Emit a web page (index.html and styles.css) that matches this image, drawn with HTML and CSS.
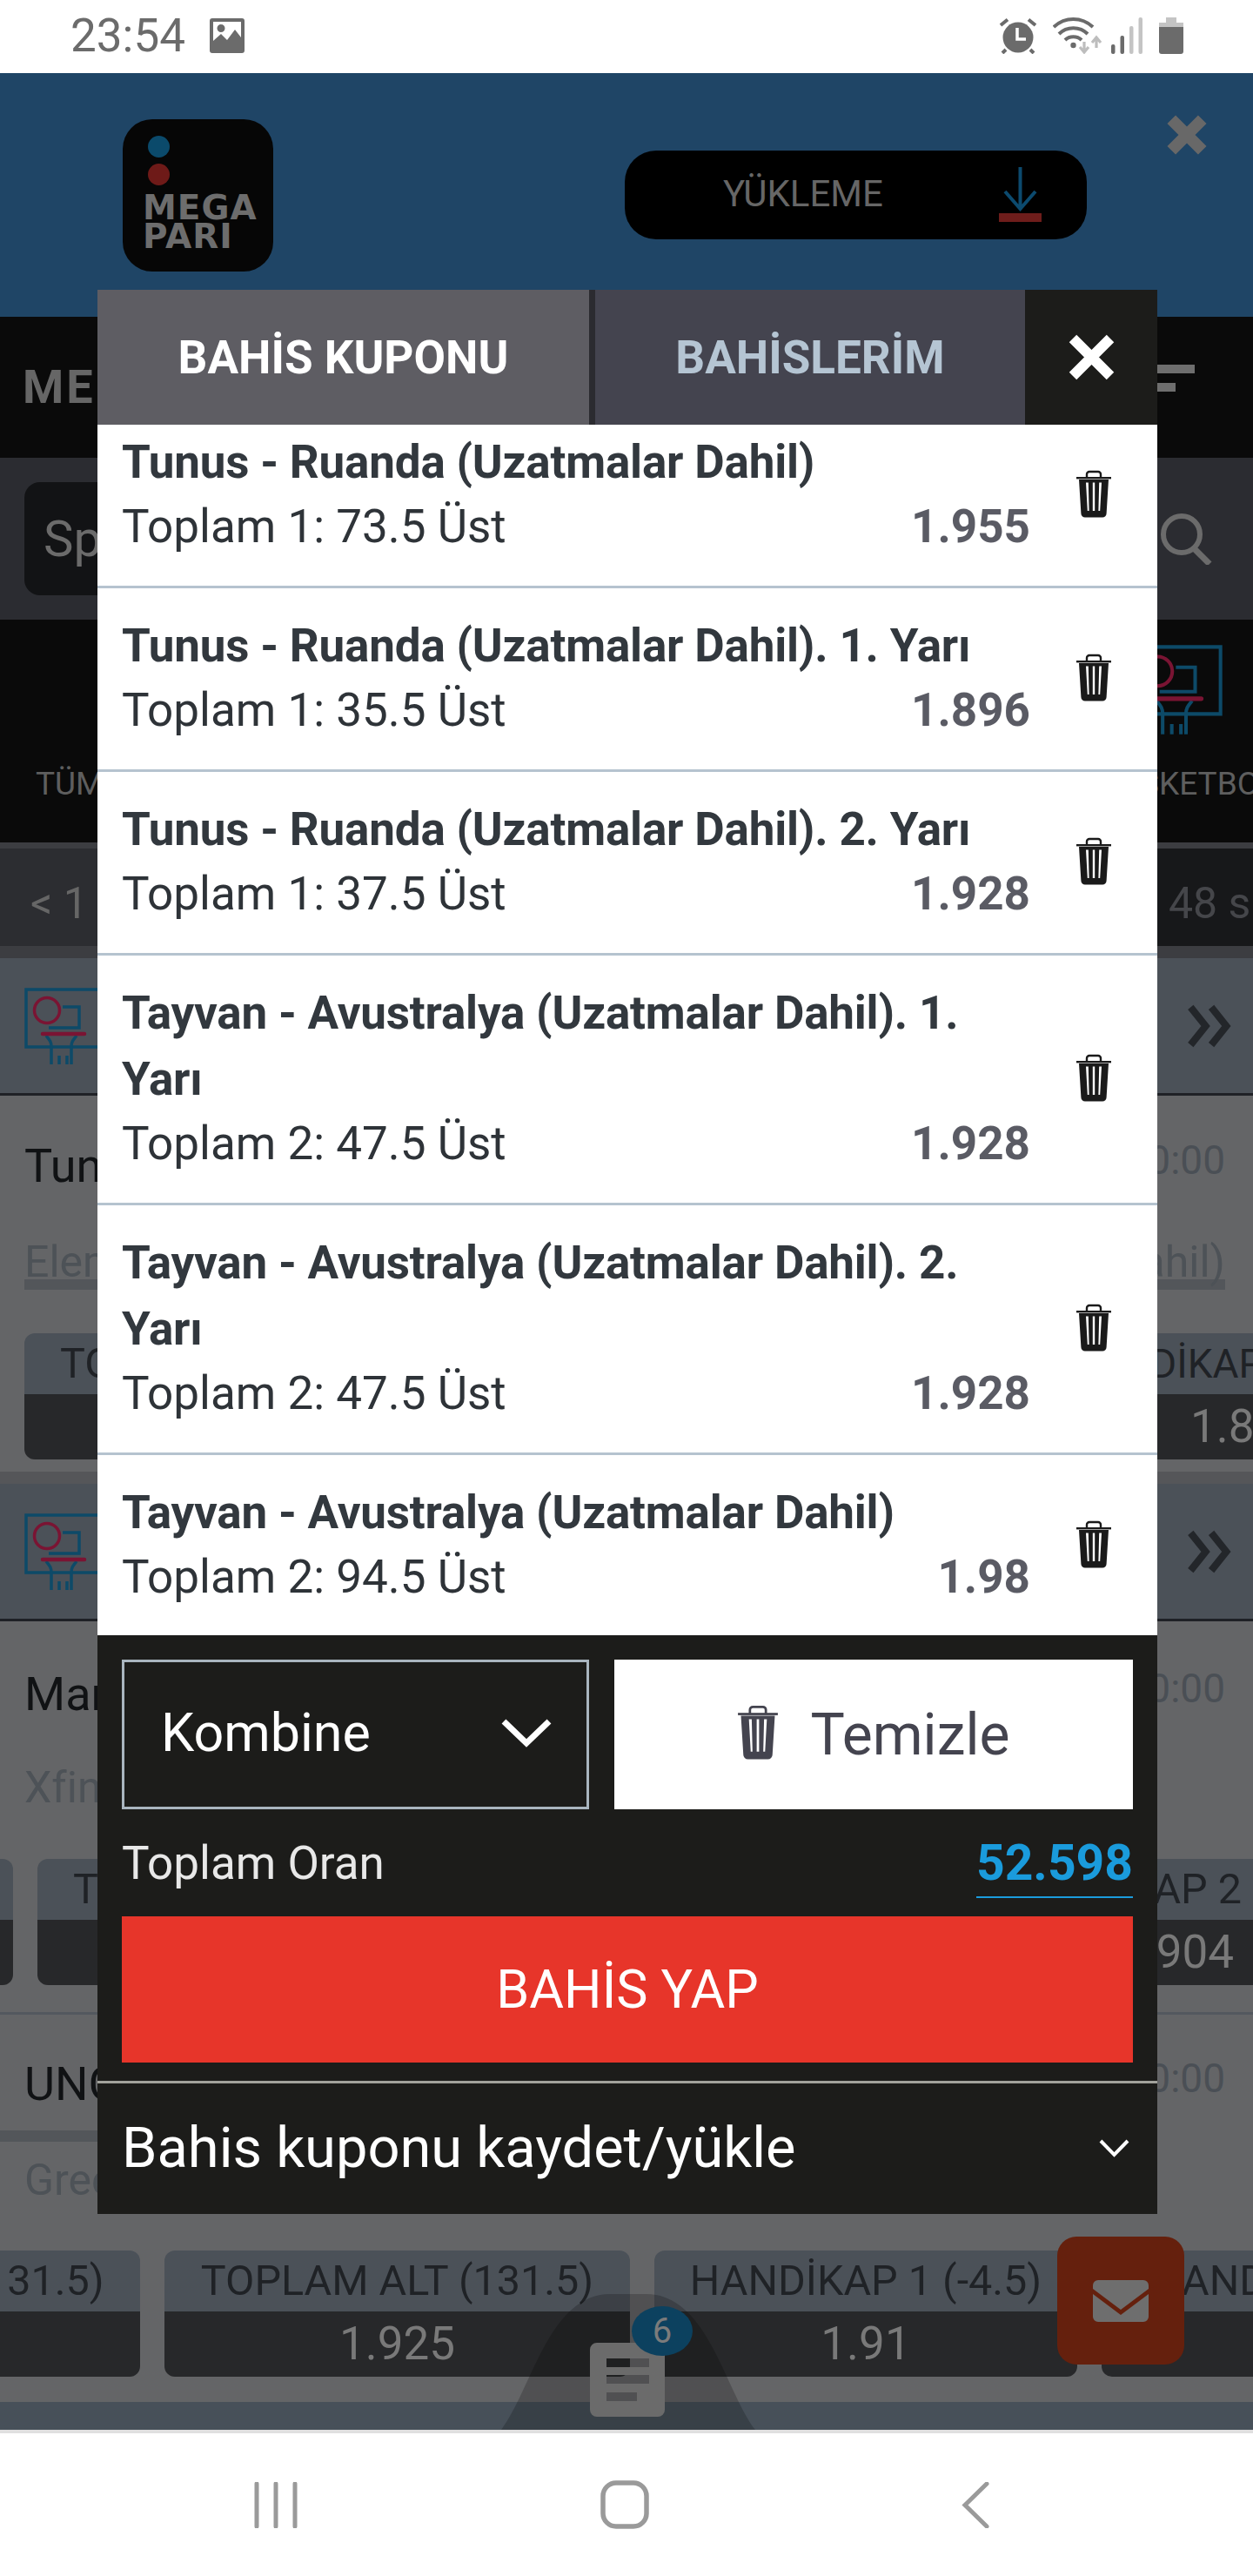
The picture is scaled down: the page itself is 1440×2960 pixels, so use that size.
FILE: index.html
```html
<!DOCTYPE html>
<html lang="tr">
<head>
<meta charset="utf-8">
<title>Bahis Kuponu</title>
<link rel="stylesheet" href="styles.css">
</head>
<body>
<svg class="defs" width="0" height="0" aria-hidden="true">
  <symbol id="trash" viewBox="0 0 40 55">
    <path d="M12 9V5a3 3 0 0 1 3-3h10a3 3 0 0 1 3 3v4" fill="none" stroke="currentColor" stroke-width="2.4"/>
    <rect x="0" y="8" width="40" height="2.4" fill="currentColor"/>
    <path fill-rule="evenodd" fill="currentColor" d="M3 11H37L34.6 50a4.6 4.6 0 0 1-4.6 4.6H10A4.6 4.6 0 0 1 5.400 50ZM11 14.500L12.800 47H14.600L13.800 14.500ZM18.800 14.500V47H21.200V14.500ZM26.200 14.500L25.400 47H27.200L29 14.500Z"/>
  </symbol>
  <symbol id="hoop" viewBox="0 0 90 90">
    <path d="M2 2H88V68H2ZM44 22H63V46H28" fill="none" stroke="#0d4a68" stroke-width="3.500"/>
    <circle cx="26" cy="26" r="14.500" fill="none" stroke="#7a1433" stroke-width="3.500"/>
    <path d="M25 55C29 60 31 62 31 68V88M60 55C56 60 54 62 54 68V88M40 78V88M49 78V88" fill="none" stroke="#0d4a68" stroke-width="3.500"/>
    <path d="M21 53H69" fill="none" stroke="#7a1433" stroke-width="4.500" stroke-linecap="round"/>
  </symbol>
  <symbol id="dchev" viewBox="0 0 50 46">
    <path d="M4 3L20 23L4 43M26 3L42 23L26 43" fill="none" stroke="#23262a" stroke-width="7.500"/>
  </symbol>
</svg>

<div class="page">
  <header class="status">
    <div class="status-left">
      <span class="clock">23:54</span>
      <svg class="ic-gallery" viewBox="0 0 40 40"><path fill="#6b6b6b" fill-rule="evenodd" d="M3 0H37A3 3 0 0 1 40 3V37A3 3 0 0 1 37 40H3A3 3 0 0 1 0 37V3A3 3 0 0 1 3 0ZM4 4V26L13 18L20 25L29 13L36 22V4ZM13 7A4.500 4.500 0 1 0 13.010 16A4.500 4.500 0 0 0 13 7Z"/></svg>
    </div>
    <div class="status-right">
      <svg class="ic-alarm" viewBox="0 0 44 42"><circle cx="22" cy="23" r="17.500" fill="#6b6b6b"/><path d="M21 12V25H31" fill="none" stroke="#fff" stroke-width="3.500"/><path d="M2 9L10 2.500M42 9L34 2.500M8 37L4 41M36 37L40 41" stroke="#6b6b6b" stroke-width="4" fill="none"/></svg>
      <svg class="ic-wifi" viewBox="0 0 57 42"><path d="M1 11C14 -1 33 -1 46 11M7 19C16 10 31 10 40 19M14 26C19 21 28 21 33 26" fill="none" stroke="#6b6b6b" stroke-width="4"/><circle cx="23.500" cy="32" r="3.200" fill="#6b6b6b"/><path d="M36 28V40M31 34L36 40L41 34" fill="none" stroke="#bdbdbd" stroke-width="3.200"/><path d="M50 35V24M45 29L50 23L55 29" fill="none" stroke="#bdbdbd" stroke-width="3.200"/></svg>
      <svg class="ic-signal" viewBox="0 0 36 42"><rect x="0" y="31" width="4.500" height="11" rx="2" fill="#6b6b6b"/><rect x="10.500" y="21" width="4.500" height="21" rx="2" fill="#6b6b6b"/><rect x="21" y="10" width="4.500" height="32" rx="2" fill="#c4c4c4"/><rect x="31.500" y="0" width="4.500" height="42" rx="2" fill="#c4c4c4"/></svg>
      <svg class="ic-battery" viewBox="0 0 28 42"><path d="M8 0H20V6H28V11H0V6H8Z" fill="#c4c4c4"/><path d="M0 11H28V39A3 3 0 0 1 25 42H3A3 3 0 0 1 0 39Z" fill="#6b6b6b"/></svg>
    </div>
  </header>

  <section class="brand">
    <div class="logo">
      <span class="dot dot-blue"></span>
      <span class="dot dot-red"></span>
      <span class="logo-text">MEGA<br>PARI</span>
    </div>
    <div class="download">
      <span>YÜKLEME</span>
      <svg class="ic-download" viewBox="0 0 49 64"><path d="M24.500 0V46M7 28L24.500 48L42 28" fill="none" stroke="#0c4a6e" stroke-width="4"/><rect x="0" y="53" width="49" height="10" fill="#6e1d1b"/></svg>
    </div>
    <svg class="ic-brand-x" viewBox="0 0 46 44"><path d="M6 5L40 39M40 5L6 39" stroke="#686868" stroke-width="13"/></svg>
  </section>

  <nav class="topnav">
    <span class="topnav-title">MENÜ</span>
    <span class="burger"><i class="b-long"></i><i class="b-short"></i></span>
  </nav>

  <div class="searchbar">
    <div class="search-input">Spor</div>
    <svg class="ic-search" viewBox="0 0 64 60"><circle cx="26" cy="25" r="21" fill="none" stroke="#6b6b6b" stroke-width="6"/><path d="M40 41L58 59" stroke="#6b6b6b" stroke-width="7"/></svg>
  </div>

  <div class="sports">
    <div class="sport sport-all"><span class="sport-label">TÜM</span></div>
    <div class="sport sport-basket">
      <svg class="hoop-big"><use href="#hoop"/></svg>
      <span class="sport-label sport-label-shift">BASKETBOL</span>
    </div>
  </div>

  <div class="timebar">
    <span class="time-left">&lt; 1</span>
    <span class="time-right">48 s.</span>
  </div>

  <div class="league">
    <svg class="hoop"><use href="#hoop"/></svg>
    <svg class="dchev"><use href="#dchev"/></svg>
  </div>
  <article class="match match-a">
    <div class="m-line"><span class="m-name">Tunus</span><span class="m-time">00:00</span></div>
    <div class="m-sub m-sub-bar"><span>Elemeler</span><span>(Uzatmalar Dahil)</span></div>
    <div class="cards">
      <div class="card card-w1"><div class="card-h">TOPLAM</div><div class="card-v">1.9</div></div>
      <div class="card card-w2"><div class="card-h">HANDİKAP 1</div><div class="card-v">1.8</div></div>
    </div>
  </article>
  <div class="strip"></div>

  <div class="league league-b">
    <svg class="hoop"><use href="#hoop"/></svg>
    <svg class="dchev"><use href="#dchev"/></svg>
  </div>
  <article class="match match-b">
    <div class="m-line"><span class="m-name">Mar</span><span class="m-time">00:00</span></div>
    <div class="m-sub"><span>Xfinity</span></div>
    <div class="cards">
      <div class="card card-w3"><div class="card-h">TOPLAM</div><div class="card-v">1.9</div></div>
      <div class="card card-w4"><div class="card-h">TOPLAM ALT</div><div class="card-v">1.9</div></div>
      <div class="card card-w5"><div class="card-h">HANDİKAP 2</div><div class="card-v">1.904</div></div>
    </div>
  </article>

  <article class="match match-c">
    <div class="m-line m-line-bar"><span class="m-name">UNG</span><span class="m-time">00:00</span></div>
    <div class="m-sub"><span>Green</span></div>
    <div class="cards">
      <div class="card card-w6 card-first"><div class="card-h">TOPLAM ÜST (131.5)</div><div class="card-v">1.9</div></div>
      <div class="card card-w6"><div class="card-h">TOPLAM ALT (131.5)</div><div class="card-v">1.925</div></div>
      <div class="card card-w7"><div class="card-h">HANDİKAP 1 (-4.5)</div><div class="card-v">1.91</div></div>
      <div class="card card-w8"><div class="card-h">HANDİKAP 2</div><div class="card-v">1.9</div></div>
    </div>
  </article>
  <div class="pagefoot"></div>

  <div class="androidnav">
    <svg class="nav-recent" viewBox="0 0 50 53"><path d="M3 2V51M25 2V51M47 2V51" stroke="#9a9a9a" stroke-width="5" stroke-linecap="round"/></svg>
    <svg class="nav-home" viewBox="0 0 56 56"><rect x="3" y="3" width="50" height="50" rx="15" fill="none" stroke="#9a9a9a" stroke-width="5.500"/></svg>
    <svg class="nav-back" viewBox="0 0 32 53"><path d="M29 2L4 26.500L29 51" fill="none" stroke="#9a9a9a" stroke-width="5" stroke-linecap="round"/></svg>
  </div>
</div>

<svg class="hump" viewBox="0 0 292 156"><path d="M0 156C35 110 55 0 125 0H167C237 0 257 110 292 156Z" fill="#000" fill-opacity=".2"/></svg>
<svg class="doc" viewBox="0 0 86 85"><path fill="#6b6b6b" fill-rule="evenodd" d="M8 0H78A8 8 0 0 1 86 8V77A8 8 0 0 1 78 85H8A8 8 0 0 1 0 77V8A8 8 0 0 1 8 0ZM19 18V28H68V18ZM19 37V47H68V37ZM19 57V67H54V57Z"/></svg>
<div class="badge">6</div>
<div class="chat">
  <svg class="ic-mail" viewBox="0 0 64 48"><path fill="#6e6e6e" d="M6 0H58A6 6 0 0 1 64 6V10L32 34L0 10V6A6 6 0 0 1 6 0ZM0 16L32 40L64 16V42A6 6 0 0 1 58 48H6A6 6 0 0 1 0 42Z"/></svg>
</div>

<aside class="modal">
  <div class="tabs">
    <div class="tab tab-active">BAHİS KUPONU</div>
    <div class="tab tab-other">BAHİSLERİM</div>
    <div class="tab-close"><svg class="ic-close" viewBox="0 0 55 55"><path d="M6 6L49 49M49 6L6 49" stroke="#fff" stroke-width="12"/></svg></div>
  </div>
  <div class="list">
    <div class="list-inner">
      <div class="bet">
        <div class="bet-main"><div class="bet-title">Tunus - Ruanda (Uzatmalar Dahil)</div><div class="bet-line"><span>Toplam 1: 73.5 Üst</span><b>1.955</b></div></div>
        <svg class="trash"><use href="#trash"/></svg>
      </div>
      <div class="bet">
        <div class="bet-main"><div class="bet-title">Tunus - Ruanda (Uzatmalar Dahil). 1. Yarı</div><div class="bet-line"><span>Toplam 1: 35.5 Üst</span><b>1.896</b></div></div>
        <svg class="trash"><use href="#trash"/></svg>
      </div>
      <div class="bet">
        <div class="bet-main"><div class="bet-title">Tunus - Ruanda (Uzatmalar Dahil). 2. Yarı</div><div class="bet-line"><span>Toplam 1: 37.5 Üst</span><b>1.928</b></div></div>
        <svg class="trash"><use href="#trash"/></svg>
      </div>
      <div class="bet">
        <div class="bet-main"><div class="bet-title">Tayvan - Avustralya (Uzatmalar Dahil). 1. Yarı</div><div class="bet-line"><span>Toplam 2: 47.5 Üst</span><b>1.928</b></div></div>
        <svg class="trash"><use href="#trash"/></svg>
      </div>
      <div class="bet">
        <div class="bet-main"><div class="bet-title">Tayvan - Avustralya (Uzatmalar Dahil). 2. Yarı</div><div class="bet-line"><span>Toplam 2: 47.5 Üst</span><b>1.928</b></div></div>
        <svg class="trash"><use href="#trash"/></svg>
      </div>
      <div class="bet bet-last">
        <div class="bet-main"><div class="bet-title">Tayvan - Avustralya (Uzatmalar Dahil)</div><div class="bet-line"><span>Toplam 2: 94.5 Üst</span><b>1.98</b></div></div>
        <svg class="trash"><use href="#trash"/></svg>
      </div>
    </div>
  </div>
  <div class="panel">
    <div class="controls">
      <div class="select"><span>Kombine</span><svg class="ic-chev" viewBox="0 0 58 34"><path d="M3 4L29 29L55 4" fill="none" stroke="#fff" stroke-width="7"/></svg></div>
      <div class="clear"><svg class="trash-clear"><use href="#trash"/></svg><span>Temizle</span></div>
    </div>
    <div class="total"><span>Toplam Oran</span><b>52.598</b></div>
    <div class="place">BAHİS YAP</div>
  </div>
  <div class="save"><span>Bahis kuponu kaydet/yükle</span><svg class="ic-chev-sm" viewBox="0 0 35 22"><path d="M2 3L17.500 19L33 3" fill="none" stroke="#fff" stroke-width="4"/></svg></div>
</aside>
</body>
</html>
```
FILE: styles.css
```css
* { box-sizing: border-box; }
html, body { margin: 0; padding: 0; }
body {
  position: relative;
  width: 1440px;
  height: 2960px;
  overflow: hidden;
  font-family: Roboto, "Liberation Sans", sans-serif;
  background: #fff;
}
.defs { position: absolute; }
.page { width: 1440px; display: flex; flex-direction: column; }

/* status bar */
.status { height: 84px; background: #fff; display: flex; justify-content: space-between; padding: 20px 80px 0 81px; }
.status-left { display: flex; gap: 28px; height: 42px; align-items: center; }
.clock { font-size: 53px; line-height: 42px; color: #6b6b6b; }
.ic-gallery { width: 40px; height: 40px; }
.status-right { display: flex; height: 42px; }
.ic-alarm { width: 44px; height: 42px; margin-right: 18px; }
.ic-wifi { width: 57px; height: 42px; margin-right: 10px; }
.ic-signal { width: 36px; height: 42px; margin-right: 19px; }
.ic-battery { width: 28px; height: 42px; }

/* brand */
.brand { height: 280px; background: #1f4566; position: relative; }
.logo { position: absolute; left: 141px; top: 53px; width: 173px; height: 175px; border-radius: 34px; background: #060606; padding: 19px 0 0 23px; }
.dot { display: block; width: 25px; height: 25px; border-radius: 50%; margin-bottom: 7px; margin-left: 6px; }
.dot-blue { background: #0b4a6b; }
.dot-red { background: #6e1a18; }
.logo-text { display: block; margin-top: 9px; font-family: "DejaVu Sans", Inter, sans-serif; font-weight: 700; font-size: 39px; line-height: 33px; letter-spacing: 1px; color: #6d6d6d; }
.download { position: absolute; left: 718px; top: 89px; width: 531px; height: 102px; background: #000; border-radius: 36px; display: flex; align-items: center; padding-left: 113px; }
.download span { font-size: 42px; color: #666; width: 317px; padding-bottom: 3px; }
.ic-download { width: 49px; height: 64px; }
.ic-brand-x { position: absolute; left: 1340px; top: 48px; width: 48px; height: 46px; }

/* top nav */
.topnav { height: 162px; background: #0a0a0a; display: flex; justify-content: space-between; padding: 56px 0 0 26px; overflow: hidden; }
.topnav-title { font-weight: 700; font-size: 54px; line-height: 50px; letter-spacing: 3px; color: #666; }
.burger { display: flex; flex-direction: column; gap: 11px; width: 110px; margin-top: -1px; }
.burger i { display: block; height: 10px; background: #6e6e6e; }
.b-long { width: 43px; }
.b-short { width: 21px; }

/* search */
.searchbar { height: 186px; background: #2b2c31; display: flex; justify-content: space-between; align-items: center; padding: 0 44px 0 28px; }
.search-input { width: 1200px; height: 130px; background: #121315; border-radius: 18px; font-size: 58px; line-height: 130px; padding-left: 22px; color: #6b6b6b; }
.ic-search { width: 64px; height: 60px; }

/* sports */
.sports { height: 256px; background: #0a0a0a; display: flex; justify-content: space-between; overflow: hidden; padding-top: 29px; }
.sport { display: flex; flex-direction: column; align-items: center; flex: none; }
.sport-all { padding: 140px 0 0 41px; }
.sport-basket { width: 230px; margin-right: -27px; }
.sport-label { font-size: 37px; line-height: 40px; color: #5e5e5e; white-space: nowrap; }
.sport-label-shift { margin-left: 26px; }
.hoop-big { width: 105px; height: 105px; margin-bottom: 35px; }

/* time */
.timebar { height: 133px; background: #3c3d41; border-top: 7px solid #3c3d41; border-bottom: 14px solid #3c3d41; display: flex; }
.time-left { width: 720px; height: 112px; background: #2c2d31; color: #666; font-size: 50px; line-height: 126px; padding-left: 35px; }
.time-right { width: 720px; height: 112px; background: #17181a; color: #45464a; font-size: 50px; line-height: 126px; padding-left: 623px; white-space: nowrap; overflow: hidden; }

/* league */
.league { height: 158px; background: #4b5158; border-bottom: 3px solid #1f2126; display: flex; justify-content: space-between; align-items: flex-start; padding: 34px 22px 0 28px; }
.hoop { width: 90px; height: 90px; }
.dchev { width: 54px; height: 50px; margin-top: 19px; }

/* matches */
.match { background: #646567; overflow: hidden; }
.match-a { padding-top: 49px; height: 432px; }
.match-b { padding-top: 52px; height: 452px; border-bottom: 3px solid #53585e; }
.match-c { padding-top: 48px; height: 445px; }
.m-line { height: 60px; display: flex; justify-content: space-between; padding: 0 32px 0 28px; }
.m-name { font-size: 54px; line-height: 64px; color: #101214; }
.m-time { font-size: 46px; line-height: 50px; color: #4a4f55; }
.m-sub { display: flex; justify-content: space-between; padding: 0 32px 0 28px; font-size: 50px; color: #4d5257; }
.match-a .m-sub { margin: 57px 32px 0 28px; padding: 0; height: 57px; line-height: 50px; border-bottom: 12px solid #53565a; }
.match-b .m-sub { margin-top: 49px; height: 60px; line-height: 60px; }
.match-c .m-sub { margin-top: 14px; height: 60px; line-height: 60px; }
.m-line-bar { position: relative; height: 98px; padding-right: 0; border-bottom: 13px solid #53565a; margin-right: 110px; }
.m-line-bar .m-time { position: absolute; right: -78px; top: 0; }

.cards { display: flex; gap: 28px; }
.match-a .cards { margin-top: 50px; padding-left: 28px; }
.match-b .cards { margin-top: 52px; margin-left: -400px; }
.match-c .cards { margin-top: 51px; margin-left: -374px; }
.card { flex: none; height: 145px; border-radius: 12px; overflow: hidden; display: flex; flex-direction: column; }
.card-h { height: 70px; background: #4b5158; color: #1f2226; font-size: 48.500px; line-height: 70px; text-align: center; white-space: nowrap; }
.card-v { flex: 1; background: #27282a; color: #797979; font-size: 53px; line-height: 75px; text-align: center; }
.card-w1 { width: 1134px; }
.card-w1 .card-h { text-align: left; padding-left: 41px; }
.card-w2 { width: 400px; }
.card-w2 .card-h { padding-left: 36px; text-align: left; font-size: 46px; }
.card-w2 .card-v { padding-left: 178px; text-align: left; }
.card-w3 { width: 415px; }
.card-w4 { width: 700px; }
.card-w4 .card-h { text-align: left; padding-left: 41px; }
.card-w5 { width: 700px; }
.card-w5 .card-h { text-align: right; padding-right: 44px; }
.card-w5 .card-v { text-align: right; padding-right: 53px; }
.card-w6 { width: 535px; }
.card-first .card-h { padding-right: 8px; }
.card-w7 { width: 486px; }
.card-w8 { width: 486px; }
.card-w8 .card-h { text-align: left; padding-left: 57px; }

.strip { height: 14px; background: #555659; }
.pagefoot { height: 32px; background: #475059; }
.androidnav { height: 168px; background: #fff; border-top: 4px solid #e0e0e0; position: relative; }
.nav-recent { position: absolute; left: 292px; top: 56px; width: 50px; height: 53px; }
.nav-home { position: absolute; left: 690px; top: 54px; width: 56px; height: 56px; }
.nav-back { position: absolute; left: 1105px; top: 56px; width: 32px; height: 53px; }

/* floating */
.hump { position: absolute; left: 576px; top: 2636px; width: 292px; height: 156px; }
.doc { position: absolute; left: 678px; top: 2692px; width: 86px; height: 85px; }
.badge { position: absolute; left: 726px; top: 2650px; width: 70px; height: 57px; border-radius: 50%; background: #0c415f; color: #7b7b7b; font-size: 40px; line-height: 57px; text-align: center; }
.chat { position: absolute; left: 1215px; top: 2570px; width: 146px; height: 147px; border-radius: 22px; background: #65200d; display: flex; align-items: center; justify-content: center; }
.ic-mail { width: 64px; height: 48px; }

/* modal */
.modal { position: absolute; left: 112px; top: 333px; width: 1218px; height: 2211px; display: flex; flex-direction: column; background: #1c1c1a; }
.tabs { height: 155px; display: flex; }
.tab { display: flex; align-items: center; justify-content: center; font-weight: 700; font-size: 53px; }
.tab-active { width: 565px; background: #5e5d63; color: #fff; }
.tab-other { width: 501px; background: #44444f; color: #b5c5d3; border-left: 7px solid #2b2b30; }
.tab-close { width: 152px; background: #1c1c1a; display: flex; align-items: center; justify-content: center; }
.ic-close { width: 55px; height: 55px; }
.list { height: 1391px; overflow: hidden; background: #fff; }
.list-inner { margin-top: -23px; }
.bet { display: flex; align-items: center; padding: 28px 53px 28px 28px; border-bottom: 3px solid #b5c3cf; }
.bet-last { border-bottom: 0; }
.bet-main { width: 1044px; margin-right: 53px; }
.bet-title { font-weight: 700; font-size: 53px; line-height: 76px; letter-spacing: -0.2px; color: #32383e; }
.bet-line { display: flex; justify-content: space-between; font-size: 53px; line-height: 72px; padding-bottom: 4px; color: #2e3338; }
.bet-line b { font-weight: 700; color: #5a5b64; }
.trash { width: 40px; height: 55px; color: #1a1a1a; flex: none; margin-top: -4px; }

.panel { padding: 28px 28px 0; }
.controls { display: flex; gap: 29px; height: 172px; }
.select { width: 537px; border: 3px solid #a9b5bf; display: flex; justify-content: space-between; padding: 0 40px 4px 42px; color: #fff; font-size: 61px; height: 172px; align-items: center; line-height: 72px; }
.ic-chev { width: 58px; height: 34px; }
.clear { width: 596px; background: #fff; display: flex; align-items: center; justify-content: center; gap: 38px; color: #44444f; font-size: 66px; }
.trash-clear { width: 46px; height: 63px; color: #44444f; margin-top: -5px; }
.total { display: flex; justify-content: space-between; align-items: flex-start; margin-top: 26px; height: 97px; color: #e8e8e8; font-size: 53px; line-height: 72px; }
.total b { font-weight: 700; font-size: 57px; color: #1a9bdc; height: 76px; border-bottom: 2px solid #1a9bdc; }
.place { height: 168px; background: #e7352a; color: #fff; font-size: 61px; line-height: 168px; text-align: center; }
.save { margin-top: 21px; border-top: 3px solid #a2a29c; flex: 1; display: flex; justify-content: space-between; align-items: center; padding: 0 32px 2px 28px; color: #fff; font-size: 65px; }
.ic-chev-sm { width: 35px; height: 22px; }
```
